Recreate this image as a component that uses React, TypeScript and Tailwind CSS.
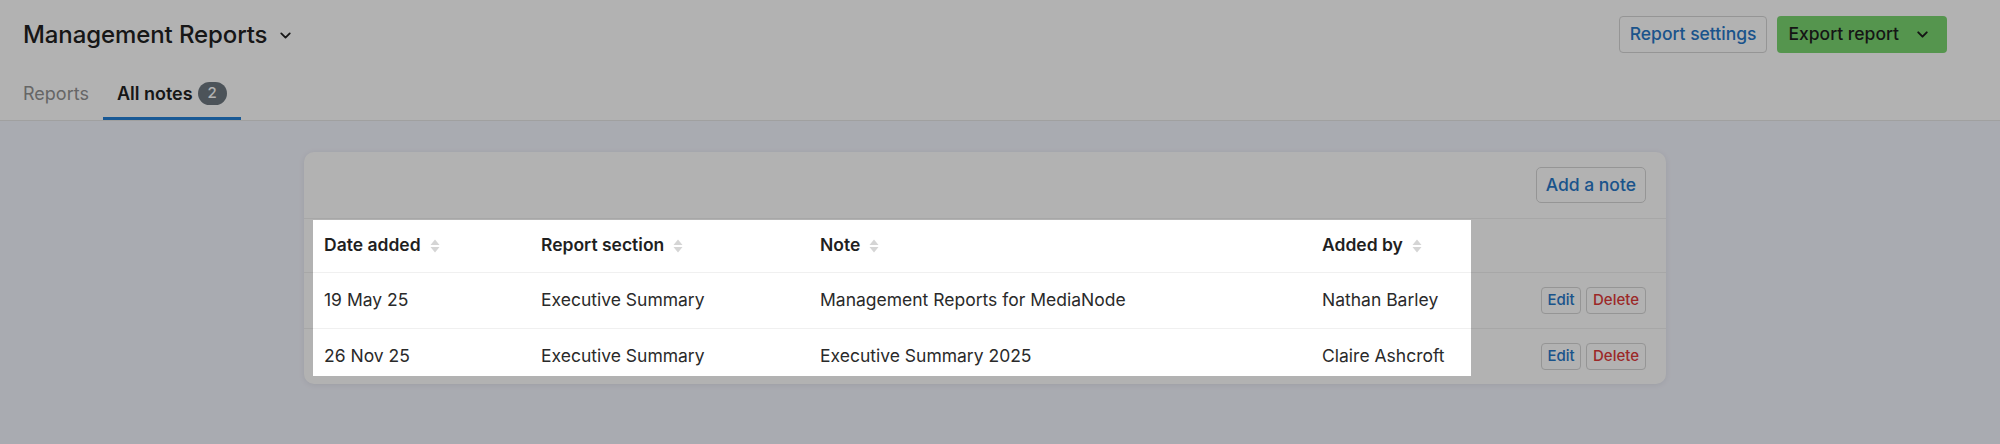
import { ChevronDown } from 'lucide-react';

type Note = {
  date: string;
  section: string;
  note: string;
  addedBy: string;
};

const notes: Note[] = [
  { date: '19 May 25', section: 'Executive Summary', note: 'Management Reports for MediaNode', addedBy: 'Nathan Barley' },
  { date: '26 Nov 25', section: 'Executive Summary', note: 'Executive Summary 2025', addedBy: 'Claire Ashcroft' },
];

const columns = ['Date added', 'Report section', 'Note', 'Added by'];

function SortIcon() {
  return (
    <svg width="10" height="14" viewBox="0 0 10 14" className="ml-[9px] shrink-0">
      <path d="M5 0.5 L9.5 6 L0.5 6 Z" fill="#d5d5d5" />
      <path d="M5 13.5 L9.5 8 L0.5 8 Z" fill="#d5d5d5" />
    </svg>
  );
}

const grid = 'grid grid-cols-[217px_279px_502px_173px_1fr]';

export default function App() {
  return (
    <div className="relative h-[444px] overflow-hidden bg-[#f3f5fe] font-['Inter',sans-serif] text-[#222]">
      <header className="bg-white border-b border-[#e6e6e6]">
        <div className="flex items-center justify-between h-[69px] pl-[23px] pr-[53px]">
          <button className="flex items-center gap-[10px] text-[24px] font-medium tracking-[-0.1px] text-[#222]">
            Management Reports
            <ChevronDown className="w-[17px] h-[17px] mt-[2px]" strokeWidth={2.6} />
          </button>
          <div className="flex items-center gap-[10px]">
            <button className="h-[37px] px-[10px] rounded-[4px] border border-[#d6d6d6] bg-white text-[17.5px] font-medium text-[#2778c8]">
              Report settings
            </button>
            <button className="h-[37px] flex items-center gap-[15px] pl-[11px] pr-[16px] rounded-[4px] bg-[#7ad670] text-[17.5px] font-medium text-[#1f1f1f]">
              Export report
              <ChevronDown className="w-[17px] h-[17px]" strokeWidth={2.8} />
            </button>
          </div>
        </div>
        <nav className="flex h-[51px] pl-[23px] text-[18px]">
          <a className="flex items-center border-b-[3px] border-transparent text-[#939393]">Reports</a>
          <a className="ml-[14px] flex items-center gap-[5px] px-[14px] border-b-[3px] border-[#2480d6] font-semibold text-[#222]">
            All notes
            <span className="flex items-center justify-center w-[29px] h-[23px] rounded-full bg-[#6e7880] text-white text-[15px] font-medium">
              2
            </span>
          </a>
        </nav>
      </header>

      <main className="pt-[31px]">
        <div className="ml-[304px] w-[1362px] rounded-[10px] bg-white shadow-[0_1px_6px_rgba(0,0,0,0.08)]">
          <div className="flex items-center justify-end h-[67px] pr-[20px] border-b border-[#efefef]">
            <button className="h-[36px] px-[9px] rounded-[5px] border border-[#d6d6d6] text-[17.5px] font-medium text-[#2778c8]">
              Add a note
            </button>
          </div>
          <div className={`${grid} h-[53px] items-center text-[17.5px] font-semibold text-[#1f1f1f]`}>
            {columns.map((c) => (
              <div key={c} className="flex items-center px-[20px]">
                {c}
                <SortIcon />
              </div>
            ))}
            <div />
          </div>
          {notes.map((n) => (
            <div key={n.date} className={`${grid} h-[56px] items-center border-t border-[#f0f0f0] text-[17.5px] text-[#2a2a2a]`}>
              <div className="px-[20px]">{n.date}</div>
              <div className="px-[20px]">{n.section}</div>
              <div className="px-[20px]">{n.note}</div>
              <div className="px-[20px]">{n.addedBy}</div>
              <div className="flex justify-end gap-[5px] pr-[20px]">
                <button className="h-[27px] w-[40px] rounded-[4px] border border-[#d6d6d6] text-[15px] font-medium text-[#2778c8]">
                  Edit
                </button>
                <button className="h-[27px] w-[60px] rounded-[4px] border border-[#d6d6d6] text-[15px] font-medium text-[#e03a3a]">
                  Delete
                </button>
              </div>
            </div>
          ))}
        </div>
      </main>

      {/* tour spotlight over the notes table */}
      <div className="pointer-events-none absolute left-[313px] top-[220px] w-[1158px] h-[156px] shadow-[0_0_0_9999px_rgba(0,0,0,0.3)]" />
    </div>
  );
}
